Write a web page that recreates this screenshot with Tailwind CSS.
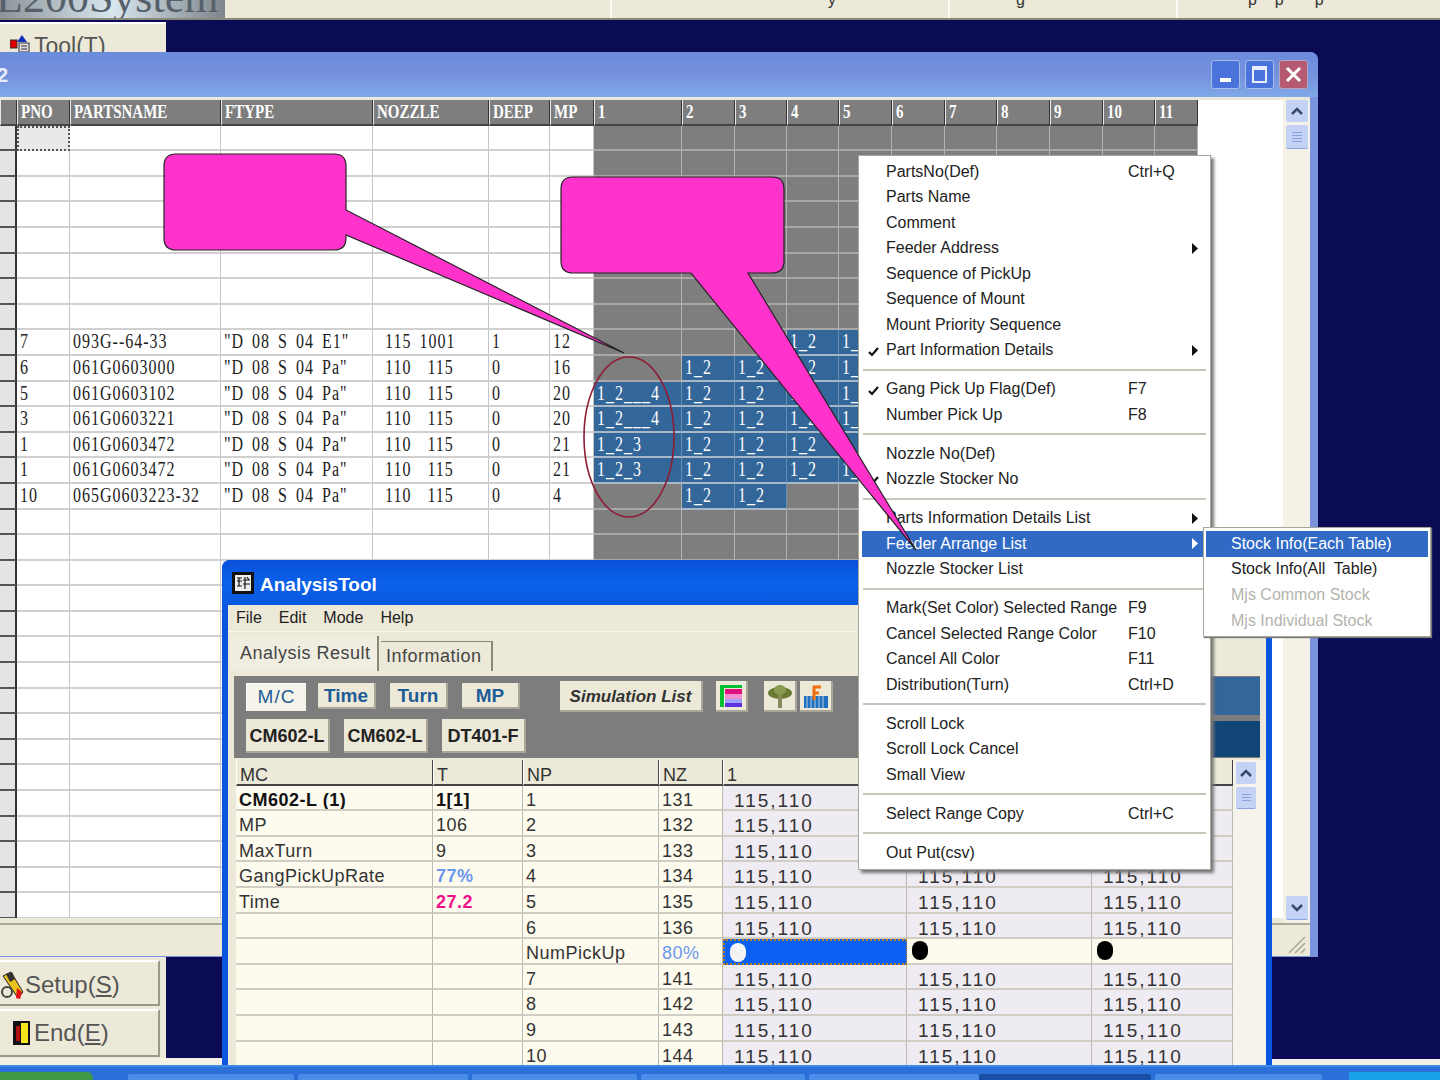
<!DOCTYPE html>
<html lang="en">
<head>
    <meta charset="UTF-8">
    <title>AnalysisTool</title>
    <script src="https://cdn.jsdelivr.net/npm/@tailwindcss/browser@4"></script>
</head>
<body class="bg-[#0a0a55]">
<div class="relative w-[1440px] h-[1080px] overflow-hidden bg-[#0a0a55] font-['Liberation_Sans',sans-serif]">

    <!-- top strip -->
    <div class="flex h-[20px] bg-[#ece9d8] border-b-2 border-[#8a8878] overflow-hidden">
        <div class="w-[225px] shrink-0 overflow-hidden bg-linear-to-r from-[#8d949a] via-[#d8e6ee] to-[#7f868c]">
            <div class="-mt-[30px] -ml-[4px] text-[44px] leading-[56px] font-['Liberation_Serif',serif] text-[#55606a] whitespace-nowrap">L200System</div>
        </div>
        <div class="w-[387px] border-r-2 border-[#fbfaf3]"></div>
        <div class="w-[338px] border-r-2 border-[#fbfaf3] pl-[216px] -mt-[12px] text-[16px] text-[#333]">y</div>
        <div class="w-[228px] border-r-2 border-[#fbfaf3] pl-[66px] -mt-[12px] text-[16px] text-[#333]">g</div>
        <div class="flex-1 pl-[70px] -mt-[12px] text-[16px] text-[#333] whitespace-pre">p    p       p</div>
    </div>

    <!-- left tool panel -->
    <div class="absolute left-0 top-[22px] w-[166px] h-[1036px] bg-[#ece9d8] border-t-2 border-white">
        <div class="flex items-center h-[30px] pl-[10px] text-[23px] text-[#555]">
            <svg class="mt-[8px]" width="24" height="20" viewBox="0 0 24 20"><rect x="0" y="7" width="7" height="8" fill="#e00000" stroke="#333"/><path d="M12 2l5 7h-10z" fill="#1030c0"/><rect x="9" y="10" width="10" height="9" fill="#ddd" stroke="#333"/><path d="M11 13h6M11 16h6" stroke="#333"/></svg>
            <span class="mt-[14px]">Tool(T)</span>
        </div>
    </div>
    <div class="absolute left-0 top-[958px] w-[166px] h-[100px] bg-[#ece9d8] flex flex-col gap-[3px] pr-[6px] pt-[2px] text-[24px] text-[#555]">
        <div class="flex items-center h-[46px] pt-[3px] border-b-2 border-r-2 border-[#9a9888] border-t-2 border-t-white">
            <svg width="25" height="30" viewBox="0 0 25 30"><path d="M3 6l8-4 12 20-5 6z" fill="#e8c020" stroke="#222"/><path d="M6 4l6-2 3 7-5 3z" fill="#333"/><path d="M17 18l5 4-2 7-4-1z" fill="#e01010"/><circle cx="7" cy="22" r="5" fill="none" stroke="#444" stroke-width="2"/></svg>
            <span>Setup(<span class="underline">S</span>)</span>
        </div>
        <div class="flex items-center h-[48px] pl-[13px] gap-[4px] border-b-2 border-r-2 border-[#9a9888] border-t-2 border-t-white">
            <svg width="17" height="24" viewBox="0 0 17 24"><rect width="17" height="24" fill="#111"/><rect x="8" y="2" width="7" height="20" fill="#f6e81c"/><rect x="3" y="5" width="4" height="15" fill="#b01010"/></svg>
            <span>End(<span class="underline">E</span>)</span>
        </div>
    </div>
    <div class="absolute left-0 top-[1058px] w-[222px] h-[7px] bg-[#f4f2e6]"></div>
    <div class="absolute left-[1270px] top-[1059px] w-[170px] h-[6px] bg-[#f4f2e6]"></div>

    <!-- main window -->
    <div class="absolute left-0 top-[52px] w-[1318px] h-[905px] flex flex-col bg-[#7b93dd] rounded-tr-[8px] overflow-hidden">
        <div class="flex items-center h-[45px] shrink-0 bg-linear-to-b from-[#6a8cdc] via-[#7591dd] to-[#7fa9e8] text-[#e8eefc] text-[20px] font-bold">
            <span class="-ml-[3px] flex-1">2</span>
            <div class="flex gap-[5px] pr-[10px]">
                <div class="flex items-end pl-[8px] pb-[6px] w-[29px] h-[29px] rounded-[3px] border border-[#a8bcec] bg-[#4a74dc]"><div class="w-[11px] h-[4px] bg-white"></div></div>
                <div class="flex items-center justify-center w-[29px] h-[29px] rounded-[3px] border border-[#a8bcec] bg-[#4a74dc]"><div class="w-[15px] h-[17px] border-2 border-t-4 border-[#e8eefc]"></div></div>
                <div class="flex items-center justify-center w-[29px] h-[29px] rounded-[3px] border border-[#b8a4bc] bg-[#b55a70]">
                    <svg width="17" height="17" viewBox="0 0 17 17"><path d="M2 2l13 13M15 2L2 15" stroke="#fff" stroke-width="3"/></svg>
                </div>
            </div>
        </div>
        <div class="flex flex-col h-[860px] mr-[8px] bg-[#ece9d8]">
            <div class="flex h-[828px] pt-[3px] border-b-2 border-[#aaa898]">
                <div id="parts" class="w-[1198px] h-[818px] grid grid-cols-[17px_53px_151px_152px_116px_61px_44px_88px_53px_52px_52px_53px_53px_52px_53px_53px_52px_43px] auto-rows-[25.6px] content-start bg-white font-['Liberation_Serif',serif] text-[16px] text-[#222] overflow-hidden"></div>
                <div class="w-[85px] h-[818px] bg-white"></div>
                <div class="w-[27px] bg-[#f4f2e6] flex flex-col justify-between items-center pb-[3px]">
                    <div class="flex flex-col gap-[3px]">
                        <div class="flex items-center justify-center w-[22px] h-[22px] bg-[#c3d2f5] rounded-[2px]"><svg width="12" height="9" viewBox="0 0 12 9"><path d="M1 7l5-5 5 5" fill="none" stroke="#3a4a6a" stroke-width="2.5"/></svg></div>
                        <div class="flex flex-col items-center justify-center gap-[2px] w-[22px] h-[24px] bg-[#c3d2f5] border-b border-[#8aa4e0] rounded-[2px]"><div class="w-[10px] h-px bg-[#8aa4e0]"></div><div class="w-[10px] h-px bg-[#8aa4e0]"></div><div class="w-[10px] h-px bg-[#8aa4e0]"></div><div class="w-[10px] h-px bg-[#8aa4e0]"></div></div>
                    </div>
                    <div class="flex items-center justify-center w-[22px] h-[24px] bg-[#c3d2f5] border-b border-[#8aa4e0] rounded-[2px]"><svg width="12" height="9" viewBox="0 0 12 9"><path d="M1 2l5 5 5-5" fill="none" stroke="#3a4a6a" stroke-width="2.5"/></svg></div>
                </div>
            </div>
            <div class="flex justify-end items-end flex-1 pr-[4px] pb-[2px]">
                <svg width="20" height="20" viewBox="0 0 20 20"><path d="M19 3L3 19M19 9l-10 10M19 15l-4 4" stroke="#a8a698" stroke-width="1.5"/></svg>
            </div>
        </div>
        <div class="h-px bg-[#7b93dd]"></div>
    </div>

    <!-- AnalysisTool window -->
    <div class="absolute left-[222px] top-[560px] w-[1050px] h-[505px] flex flex-col bg-[#0a55e0] rounded-t-[8px] px-[6px] overflow-hidden">
        <div class="flex items-center gap-[6px] h-[45px] shrink-0 -mx-[6px] pl-[10px] bg-linear-to-b from-[#0a50d8] via-[#0a60ea] to-[#0a58e0] text-white text-[19px] font-bold">
            <svg width="22" height="22" viewBox="0 0 22 22"><rect width="22" height="22" fill="#111"/><rect x="3" y="3" width="16" height="16" fill="#eee"/><path d="M5 6h5M5 9h5M7 6v8M5 14h5M13 5v12M11 8h7M11 12h7M15 5l2 3" stroke="#111" stroke-width="1.2" fill="none"/></svg>
            <span class="pt-[5px]">AnalysisTool</span>
        </div>
        <div class="flex flex-col flex-1 bg-[#ece9d8] min-h-0">
            <div class="flex gap-[17px] items-center h-[27px] shrink-0 pl-[8px] text-[16px] text-[#222] border-b border-[#f8f6ec]">
                <span>File</span><span>Edit</span><span>Mode</span><span>Help</span>
            </div>
            <div class="flex items-end h-[39px] shrink-0 pl-[2px] text-[#444] text-[18px] tracking-[0.5px]">
                <div class="flex items-center w-[149px] h-[35px] pl-[10px] border-r-2 border-[#8a8878] bg-[#f0eee0]">Analysis Result</div>
                <div class="flex items-center w-[112px] h-[30px] ml-[2px] pl-[5px] border-r-2 border-t border-[#8a8878]">Information</div>
            </div>
            <div class="flex ml-[6px] mt-[5px] h-[82px] w-[1026px] shrink-0 bg-[#7d7d7d]">
                <div class="flex flex-col flex-1 pl-[12px] pt-[7px] gap-[8px]">
                    <div class="flex h-[28px] text-[19px] font-bold text-[#1f5c96]">
                        <div class="flex items-center justify-center w-[60px] h-[28px] bg-[#f6f4ea] border-l border-t border-white font-normal tracking-[1px] text-[#1f5c96]">M/C</div>
                        <div class="flex items-center justify-center w-[58px] h-[26px] pt-[3px] ml-[12px] bg-[#ece9d8] border-b-2 border-r-2 border-[#a8a698]">Time</div>
                        <div class="flex items-center justify-center w-[58px] h-[26px] pt-[3px] ml-[14px] bg-[#ece9d8] border-b-2 border-r-2 border-[#a8a698]">Turn</div>
                        <div class="flex items-center justify-center w-[58px] h-[26px] pt-[3px] ml-[14px] bg-[#ece9d8] border-b-2 border-r-2 border-[#a8a698]">MP</div>
                        <div class="flex items-center justify-center w-[143px] h-[31px] pt-[3px] -mt-[2px] ml-[40px] bg-[#ece9d8] border-b-2 border-r-2 border-[#a8a698] text-[17px] italic text-[#333]">Simulation List</div>
                        <div class="flex items-center justify-center w-[32px] h-[31px] -mt-[2px] ml-[13px] bg-[#ece9d8] border-b-2 border-r-2 border-[#a8a698]">
                            <svg width="24" height="24" viewBox="0 0 24 24"><path d="M1 23V1h22v3H5v19z" fill="#00c030"/><rect x="6" y="5" width="17" height="5" fill="#e01080"/><rect x="6" y="10" width="17" height="5" fill="#f090d0"/><rect x="6" y="15" width="17" height="4" fill="#a0a0ff"/><rect x="6" y="19" width="17" height="4" fill="#6030e0"/></svg>
                        </div>
                        <div class="flex items-center justify-center w-[33px] h-[31px] -mt-[2px] ml-[16px] bg-[#ece9d8] border-b-2 border-r-2 border-[#a8a698]">
                            <svg width="26" height="26" viewBox="0 0 26 26"><ellipse cx="13" cy="10" rx="12" ry="6" fill="#6a7a30"/><ellipse cx="13" cy="7" rx="6" ry="5" fill="#8a9a50"/><rect x="11" y="12" width="4" height="13" fill="#8a8a60"/></svg>
                        </div>
                        <div class="flex items-center justify-center w-[33px] h-[31px] -mt-[2px] ml-[3px] bg-[#ece9d8] border-b-2 border-r-2 border-[#a8a698]">
                            <svg width="26" height="24" viewBox="0 0 26 24"><rect x="1" y="12" width="24" height="12" fill="#2070c0"/><path d="M4 12v12M8 12v12M12 12v12M16 12v12M20 12v12" stroke="#bcd" /><path d="M11 16V3h7M11 9h5" fill="none" stroke="#f07010" stroke-width="3"/></svg>
                        </div>
                    </div>
                    <div class="flex gap-[14px] text-[18px] font-bold text-[#222]">
                        <div class="flex items-center justify-center w-[84px] h-[34px] pt-[3px] bg-[#ece9d8] border-b-2 border-r-2 border-[#a8a698]">CM602-L</div>
                        <div class="flex items-center justify-center w-[84px] h-[34px] pt-[3px] bg-[#ece9d8] border-b-2 border-r-2 border-[#a8a698]">CM602-L</div>
                        <div class="flex items-center justify-center w-[84px] h-[34px] pt-[3px] bg-[#ece9d8] border-b-2 border-r-2 border-[#a8a698]">DT401-F</div>
                    </div>
                </div>
                <div class="flex flex-col w-[50px] shrink-0 pt-px">
                    <div class="h-[38px] bg-[#336699]"></div>
                    <div class="h-[6px]"></div>
                    <div class="h-[36px] bg-[#114477]"></div>
                </div>
            </div>
            <div class="flex flex-1 min-h-0 mt-[2px] pl-[8px]">
                <div id="result" class="w-[997px] grid grid-cols-[197px_90px_136px_64px_184px_185px_141px] auto-rows-[25.6px] content-start text-[18px] text-[#333] overflow-hidden"></div>
                <div class="flex-1 bg-[#f6f4ea] flex flex-col items-start pl-[3px] gap-[3px] pt-[2px]">
                    <div class="flex items-center justify-center w-[20px] h-[22px] bg-[#c3d2f5] rounded-[2px]"><svg width="12" height="9" viewBox="0 0 12 9"><path d="M1 7l5-5 5 5" fill="none" stroke="#3a4a6a" stroke-width="2.5"/></svg></div>
                    <div class="flex flex-col items-center justify-center gap-[2px] w-[20px] h-[22px] bg-[#c3d2f5] border-b border-[#8aa4e0] rounded-[2px]"><div class="w-[9px] h-px bg-[#8aa4e0]"></div><div class="w-[9px] h-px bg-[#8aa4e0]"></div><div class="w-[9px] h-px bg-[#8aa4e0]"></div></div>
                </div>
            </div>
        </div>
    </div>

    <!-- context menu -->
    <div id="menu" class="absolute left-[858px] top-[155px] w-[353px] h-[715px] pt-[3px] pl-[3px] pr-[3px] bg-white border border-[#a8a698] shadow-[3px_3px_3px_#777] text-[16px] text-[#222]"></div>

    <!-- submenu -->
    <div id="submenu" class="absolute left-[1203px] top-[527px] w-[228px] h-[110px] pt-[3px] px-[2px] bg-white border border-[#a8a698] shadow-[1px_1px_1px_#777] text-[16px] text-[#222]"></div>

    <!-- callouts -->
    <svg class="absolute left-0 top-0 pointer-events-none" width="1440" height="1080" viewBox="0 0 1440 1080">
        <ellipse cx="629" cy="437" rx="45" ry="80" fill="none" stroke="#8e1c34" stroke-width="1.6"/>
        <path d="M176 154H334Q346 154 346 166V210L624 353L346 235V238Q346 250 334 250H176Q164 250 164 238V166Q164 154 176 154Z" fill="#ff33cc" stroke="#222" stroke-width="1.2"/>
        <path d="M573 177H772Q784 177 784 189V261Q784 273 772 273H748L916 550L691 273H573Q561 273 561 261V189Q561 177 573 177Z" fill="#ff33cc" stroke="#222" stroke-width="1.2"/>
    </svg>

    <!-- taskbar -->
    <div class="absolute left-0 top-[1065px] w-[1440px] h-[15px] flex items-end gap-[4px] bg-[#2a70d8] border-t-2 border-[#3f8ae8]">
        <div class="w-[93px] h-[8px] mr-[31px] bg-[#3f9a48] rounded-tr-[6px]"></div>
        <div class="w-[166px] h-[6px] bg-[#4a8ce8] rounded-t-[2px]"></div>
        <div class="w-[170px] h-[6px] bg-[#4a8ce8] rounded-t-[2px]"></div>
        <div class="w-[165px] h-[6px] bg-[#4a8ce8] rounded-t-[2px]"></div>
        <div class="w-[164px] h-[6px] bg-[#4a8ce8] rounded-t-[2px]"></div>
        <div class="w-[170px] h-[6px] bg-[#4a8ce8] rounded-t-[2px]"></div>
        <div class="w-[172px] h-[6px] -mx-[4px] bg-[#1a4fa8] rounded-t-[2px]"></div>
        <div class="w-[167px] h-[6px] ml-[4px] bg-[#4a8ce8] rounded-t-[2px]"></div>
        <div class="ml-auto w-[91px] h-[8px] bg-[#18a0e8]"></div>
    </div>
</div>

<script>
    function cell(parent, cls, text) {
        const div = document.createElement('div');
        div.className = cls;
        if (text) div.textContent = text;
        parent.appendChild(div);
        return div;
    }

    // tall bitmap look of the parts grid: text is stretched a little
    function gridCell(parent, cls, text) {
        const div = cell(parent, cls);
        if (text) cell(div, 'inline-block scale-y-125 origin-center', text);
    }

    // parts grid
    const parts = document.getElementById('parts');
    const headers = ['', 'PNO', 'PARTSNAME', 'FTYPE', 'NOZZLE', 'DEEP', 'MP', '1', '2', '3', '4', '5', '6', '7', '8', '9', '10', '11'];
    headers.forEach(h => {
        gridCell(parts, 'h-[25.6px] pl-[3px] bg-[#7e7e7e] border-l border-[#e8e8e8] border-r border-r-[#333] border-b-2 border-b-[#444] text-white font-bold text-[15px] leading-[24px] whitespace-nowrap overflow-hidden', h);
    });

    const partRows = {
        8: ['7', '093G--64-33', '"D 08 S 04 E1"', '115 1001', '1', '12', '', '', '', '1_2', '1_'],
        9: ['6', '061G0603000', '"D 08 S 04 Pa"', '110  115', '0', '16', '', '1_2', '1_2', '1_2', '1_'],
        10: ['5', '061G0603102', '"D 08 S 04 Pa"', '110  115', '0', '20', '1_2___4', '1_2', '1_2', '1_2', '1_'],
        11: ['3', '061G0603221', '"D 08 S 04 Pa"', '110  115', '0', '20', '1_2___4', '1_2', '1_2', '1_2', '1_'],
        12: ['1', '061G0603472', '"D 08 S 04 Pa"', '110  115', '0', '21', '1_2_3', '1_2', '1_2', '1_2', '1_'],
        13: ['1', '061G0603472', '"D 08 S 04 Pa"', '110  115', '0', '21', '1_2_3', '1_2', '1_2', '1_2', '1_'],
        14: ['10', '065G0603223-32', '"D 08 S 04 Pa"', '110  115', '0', '4', '', '1_2', '1_2']
    };

    for (let r = 0; r < 31; r++) {
        const row = partRows[r] || [];
        cell(parts, 'h-[25.6px] bg-[#e4e4e4] border-r-2 border-r-[#333] border-b-2 border-b-[#555]');
        for (let c = 0; c < 17; c++) {
            const text = row[c] || '';
            if (r === 0 && c === 0) {
                cell(parts, 'h-[25.6px] bg-[#e8e8e8] border-2 border-dotted border-[#555]');
            } else if (c < 6) {
                const pad = c === 3 ? 'pl-[12px]' : 'pl-[3px]';
                gridCell(parts, 'h-[25.6px] ' + pad + ' bg-white border-r border-r-[#c4c4c4] border-b-2 border-b-[#d0d0d0] leading-[24px] tracking-[1px] [word-spacing:3px] whitespace-pre overflow-hidden', text);
            } else if (text) {
                gridCell(parts, 'h-[25.6px] pl-[3px] bg-[#336699] border-r border-r-[#6a8fb4] border-b-2 border-b-[#a8b8c8] text-white leading-[24px] tracking-[1px] whitespace-pre overflow-hidden', text);
            } else {
                cell(parts, 'h-[25.6px] bg-[#7e7e7e] border-r border-r-[#b4b4b4] border-b-2 border-b-[#a8a8a8]');
            }
        }
    }

    // analysis result table
    const result = document.getElementById('result');
    ['MC', 'T', 'NP', 'NZ', '1', '2', '3'].forEach(h => {
        cell(result, 'h-[25.6px] pl-[3px] pt-[3px] bg-[#ece9d8] border-l border-l-white border-r border-r-[#444] border-b-2 border-b-[#444] leading-[24px] text-[#333]', h);
    });

    const v = '115,110';
    const resultRows = [
        ['CM602-L (1)', '1[1]', '1', '131', v, v, v],
        ['MP', '106', '2', '132', v, v, v],
        ['MaxTurn', '9', '3', '133', v, v, v],
        ['GangPickUpRate', '77%', '4', '134', v, v, v],
        ['Time', '27.2', '5', '135', v, v, v],
        ['', '', '6', '136', v, v, v],
        ['', '', 'NumPickUp', '80%', 'dot', 'dot', 'dot'],
        ['', '', '7', '141', v, v, v],
        ['', '', '8', '142', v, v, v],
        ['', '', '9', '143', v, v, v],
        ['', '', '10', '144', v, v, v]
    ];

    resultRows.forEach((row, r) => {
        row.forEach((text, c) => {
            let cls = 'h-[25.6px] pl-[3px] pt-[2px] bg-[#fdfaee] border-r border-r-[#bcbab0] border-b-2 border-b-[#cfcdc4] leading-[25px] tracking-[0.5px] whitespace-nowrap overflow-hidden';
            if (r === 0 && c < 2) cls += ' font-bold text-[#111]';
            if (r === 3 && c === 1) cls += ' font-bold text-[#6c98f0]';
            if (r === 4 && c === 1) cls += ' font-bold text-[#f0108a]';
            if (r === 6 && c === 3) cls += ' text-[#6c98f0]';
            if (c > 3 && r !== 6) cls += ' !pl-[11px] !bg-[#efebf2] text-[19px] tracking-[2px]';
            if (text === 'dot') {
                const box = cell(result, 'h-[25.6px] pl-[5px] pt-[2px] border-r border-r-[#bcbab0] ' + (c === 4 ? 'bg-[#0a60f0] border-2 border-dotted !border-[#b08020]' : 'bg-[#fdfaee] border-b-2 border-b-[#cfcdc4]'));
                cell(box, 'w-[16px] h-[19px] rounded-full ' + (c === 4 ? 'bg-[#f4f4f4]' : 'bg-black'));
            } else {
                cell(result, cls, text);
            }
        });
    });

    // context menu
    const menuItems = [
        ['PartsNo(Def)', 'Ctrl+Q'], ['Parts Name'], ['Comment'], ['Feeder Address', '', 'arrow'],
        ['Sequence of PickUp'], ['Sequence of Mount'], ['Mount Priority Sequence'],
        ['Part Information Details', '', 'arrow', 'check'], null,
        ['Gang Pick Up Flag(Def)', 'F7', '', 'check'], ['Number Pick Up', 'F8'], null,
        ['Nozzle No(Def)'], ['Nozzle Stocker No', '', '', 'check'], null,
        ['Parts Information Details List', '', 'arrow'], ['Feeder Arrange List', '', 'arrow', '', 'active'], ['Nozzle Stocker List'], null,
        ['Mark(Set Color) Selected Range', 'F9'], ['Cancel Selected Range Color', 'F10'], ['Cancel All Color', 'F11'], ['Distribution(Turn)', 'Ctrl+D'], null,
        ['Scroll Lock'], ['Scroll Lock Cancel'], ['Small View'], null,
        ['Select Range Copy', 'Ctrl+C'], null,
        ['Out Put(csv)']
    ];

    const menu = document.getElementById('menu');
    menuItems.forEach(item => {
        if (!item) {
            const sep = cell(menu, 'flex items-center h-[13.5px]');
            cell(sep, 'w-full h-[2px] mx-[1px] bg-[#c8c6ba]');
            return;
        }
        const [label, key, arrow, check, active] = item;
        const row = cell(menu, 'relative flex items-center h-[25.5px] pl-[24px] ' + (active ? 'bg-[#316ac5] text-white' : ''));
        if (check) {
            row.insertAdjacentHTML('beforeend', '<svg class="absolute left-[6px] top-[9px]" width="11" height="10" viewBox="0 0 11 10"><path d="M1 5l3 3 6-7" fill="none" stroke="#111" stroke-width="2.2"/></svg>');
        }
        cell(row, 'w-[242px] whitespace-nowrap', label);
        cell(row, 'whitespace-nowrap', key);
        if (arrow) {
            row.insertAdjacentHTML('beforeend', '<svg class="absolute right-[8px] top-[7px]" width="7" height="11" viewBox="0 0 7 11"><path d="M0 0l6 5.5L0 11z" fill="' + (active ? '#fff' : '#111') + '"/></svg>');
        }
    });

    const submenu = document.getElementById('submenu');
    cell(submenu, 'flex items-center h-[25.6px] pl-[25px] bg-[#316ac5] text-white', 'Stock Info(Each Table)');
    cell(submenu, 'flex items-center h-[25.6px] pl-[25px] whitespace-pre', 'Stock Info(All  Table)');
    cell(submenu, 'flex items-center h-[25.6px] pl-[25px] text-[#b4b4ac]', 'Mjs Common Stock');
    cell(submenu, 'flex items-center h-[25.6px] pl-[25px] text-[#b4b4ac]', 'Mjs Individual Stock');
</script>
</body>
</html>
